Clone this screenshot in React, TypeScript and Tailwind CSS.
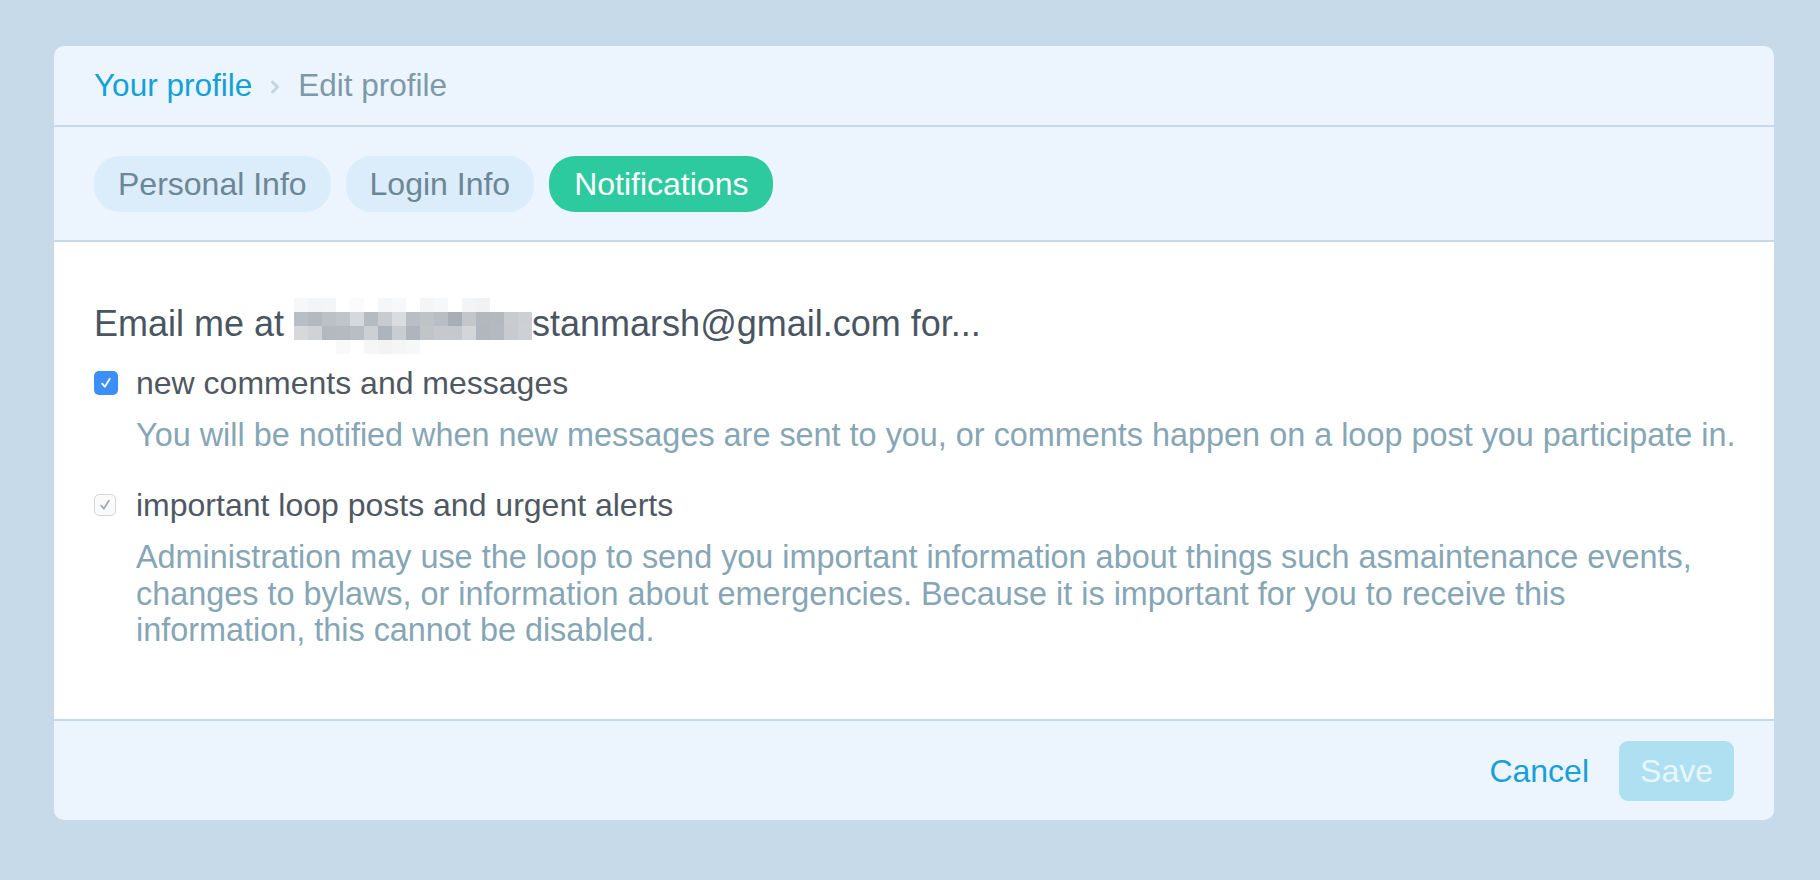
import React from "react";

const font = { fontFamily: '"Liberation Sans", Arial, sans-serif' };

// pixelated (blurred) part of the email address, one string of greys per row
const mosaicRows: string[][] = [
  ["#f6f7f8", "#f3f4f6", "#f4f5f7", "#ffffff", "#fbfbfc", "#ffffff", "#f5f6f7", "#f7f8f9", "#ffffff", "#f4f5f6", "#f6f7f8", "#ffffff", "#f3f4f5", "#f1f2f4", "#ffffff", "#ffffff", "#ffffff"],
  ["#b8bec5", "#b3b9c0", "#bcc1c8", "#c0c5cb", "#d5d8dc", "#b5bbc2", "#c8ccd1", "#dadde0", "#b9bec4", "#bec3c8", "#b9bec4", "#a8aeb6", "#c3c7cc", "#b3b8bf", "#b4b9c0", "#c8ccd0", "#ccd0d4"],
  ["#d6d8dc", "#d0d2d6", "#b4b9c0", "#b5bac1", "#b9bec4", "#ccd0d4", "#aeb4bb", "#c9ccd1", "#b0b5bc", "#c1c5ca", "#c5c9cd", "#c5c9cd", "#d2d5d9", "#b2b7be", "#b5bac1", "#c7cacf", "#cdd0d4"],
  ["#ffffff", "#ffffff", "#ffffff", "#f8f9fa", "#ffffff", "#f5f6f7", "#f2f3f5", "#f4f5f6", "#f6f7f8", "#ffffff", "#ffffff", "#ffffff", "#ffffff", "#ffffff", "#ffffff", "#ffffff", "#ffffff"],
];

function Mosaic() {
  const size = 14;
  return (
    <svg width={17 * size} height={4 * size} viewBox={`0 0 ${17 * size} ${4 * size}`} className="block">
      {mosaicRows.map((row, r) =>
        row.map((c, i) => <rect key={`${r}-${i}`} x={i * size} y={r * size} width={size} height={size} fill={c} />)
      )}
    </svg>
  );
}

function CheckIcon({ color }: { color: string }) {
  return (
    <svg width="14" height="14" viewBox="0 0 14 14" fill="none">
      <path d="M3.2 7.6 L5.8 10.8 L10.8 2.8" stroke={color} strokeWidth="1.8" strokeLinecap="round" strokeLinejoin="round" />
    </svg>
  );
}

const tabs = [
  { label: "Personal Info", active: false },
  { label: "Login Info", active: false },
  { label: "Notifications", active: true },
];

export default function App() {
  return (
    <div className="min-h-screen bg-[#c6daea] pt-[46px]" style={font}>
      <div className="ml-[54px] w-[1720px] overflow-hidden rounded-[10px] bg-[#ecf5fd]">
        {/* breadcrumb */}
        <div className="flex h-[81px] items-center border-b-2 border-[#c5d9eb] px-[40px] text-[31.5px]">
          <span className="text-[#14a0d9]">Your profile</span>
          <svg width="10" height="14" viewBox="0 0 10 14" className="mx-[18px] mt-[3px]" fill="none">
            <path d="M2.5 2 L7.5 7 L2.5 12" stroke="#c3d5e4" strokeWidth="3" strokeLinecap="round" strokeLinejoin="round" />
          </svg>
          <span className="text-[#7d99a8]">Edit profile</span>
        </div>

        {/* tabs */}
        <div className="flex gap-[15px] border-b-2 border-[#c5d9eb] px-[40px] pt-[29px] pb-[28px]">
          {tabs.map((t) => (
            <button
              key={t.label}
              className={
                t.active
                  ? "flex h-[56px] items-center rounded-[26px] bg-[#2dcaa0] px-[25px] text-[32px] text-white"
                  : "flex h-[56px] items-center rounded-[26px] bg-[#dbecfb] px-[24px] text-[32px] text-[#6b8795]"
              }
            >
              {t.label}
            </button>
          ))}
        </div>

        {/* body */}
        <div className="h-[477px] bg-white px-[40px] pt-[60px]">
          <div className="flex h-[44px] items-center text-[36px] text-[#4a5562]">
            <span>Email me at&nbsp;</span>
            <span className="mt-[4px]">
              <Mosaic />
            </span>
            <span>stanmarsh@gmail.com for...</span>
          </div>

          <div className="mt-[17px] flex h-[40px] items-center">
            <span className="flex h-[24px] w-[24px] items-center justify-center rounded-[5px] bg-[#3b8ff6]">
              <CheckIcon color="#ffffff" />
            </span>
            <span className="ml-[18px] text-[32px] text-[#4f5862]">new comments and messages</span>
          </div>
          <p className="ml-[42px] mt-[14px] whitespace-nowrap text-[32.4px] leading-[36px] text-[#86a6b5]">
            You will be notified when new messages are sent to you, or comments happen on a loop post you participate in.
          </p>

          <div className="mt-[32px] flex h-[40px] items-center">
            <span className="flex h-[22px] w-[22px] items-center justify-center rounded-[5px] border border-[#d3d6d9] bg-[#fafafa]">
              <CheckIcon color="#a4a9ae" />
            </span>
            <span className="ml-[20px] text-[32px] text-[#4f5862]">important loop posts and urgent alerts</span>
          </div>
          <p className="ml-[42px] mt-[14px] whitespace-nowrap text-[32.4px] leading-[36.5px] text-[#86a6b5]">
            Administration may use the loop to send you important information about things such asmaintenance events,
            <br />
            changes to bylaws, or information about emergencies. Because it is important for you to receive this
            <br />
            information, this cannot be disabled.
          </p>
        </div>

        {/* footer */}
        <div className="flex h-[101px] items-center justify-end gap-[30px] border-t-2 border-[#c5d9eb] px-[40px]">
          <button className="text-[32px] text-[#18a0d8]">Cancel</button>
          <button className="flex h-[60px] w-[115px] items-center justify-center rounded-[9px] bg-[#aee0f2] text-[32px] text-[#e8f7fd]">
            Save
          </button>
        </div>
      </div>
    </div>
  );
}
